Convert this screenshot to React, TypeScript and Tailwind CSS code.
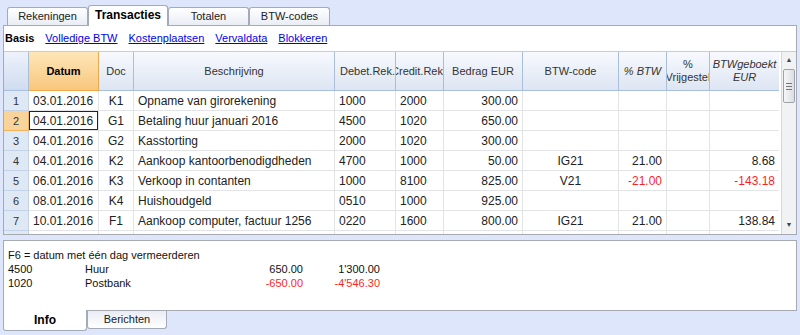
import React from "react";

const cols = "grid-cols-[25px_70px_35px_201px_61px_48px_79px_96px_48px_43px_70px]";

type Row = {
  n: number;
  date: string;
  doc: string;
  desc: string;
  deb: string;
  cred: string;
  amt: string;
  code?: string;
  pct?: string;
  btw?: string;
  neg?: boolean;
};

const rows: Row[] = [
  { n: 1, date: "03.01.2016", doc: "K1", desc: "Opname van girorekening", deb: "1000", cred: "2000", amt: "300.00" },
  { n: 2, date: "04.01.2016", doc: "G1", desc: "Betaling huur januari 2016", deb: "4500", cred: "1020", amt: "650.00" },
  { n: 3, date: "04.01.2016", doc: "G2", desc: "Kasstorting", deb: "2000", cred: "1020", amt: "300.00" },
  { n: 4, date: "04.01.2016", doc: "K2", desc: "Aankoop kantoorbenodigdheden", deb: "4700", cred: "1000", amt: "50.00", code: "IG21", pct: "21.00", btw: "8.68" },
  { n: 5, date: "06.01.2016", doc: "K3", desc: "Verkoop in contanten", deb: "1000", cred: "8100", amt: "825.00", code: "V21", pct: "-21.00", btw: "-143.18", neg: true },
  { n: 6, date: "08.01.2016", doc: "K4", desc: "Huishoudgeld", deb: "0510", cred: "1000", amt: "925.00" },
  { n: 7, date: "10.01.2016", doc: "F1", desc: "Aankoop computer, factuur 1256", deb: "0220", cred: "1600", amt: "800.00", code: "IG21", pct: "21.00", btw: "138.84" },
];

const cell = "h-[20px] border-r border-b border-[#e2e4e8] px-[4px] leading-[20px] whitespace-nowrap overflow-hidden";
const head =
  "h-[39px] border-r border-b border-[#a9bedb] bg-gradient-to-b from-[#f7f9fd] to-[#dde6f3] flex items-center justify-center text-center text-[11px] leading-[13px] text-[#333] overflow-hidden whitespace-nowrap";

function TopTab({ label, active }: { label: string; active?: boolean }) {
  return active ? (
    <div className="relative z-10 -mb-px h-[21px] w-[80px] rounded-t-[3px] border border-b-0 border-[#a3abb8] bg-white text-center text-[12px] font-bold leading-[19px] text-black">
      {label}
    </div>
  ) : (
    <div className="mt-[2px] h-[18px] w-[81px] rounded-t-[3px] border border-b-0 border-[#a3abb8] bg-gradient-to-b from-white to-[#e9edf4] text-center text-[11px] leading-[17px] text-[#222]">
      {label}
    </div>
  );
}

export default function App() {
  return (
    <div className="flex h-[335px] w-[800px] flex-col bg-[#dee6fc] font-['Liberation_Sans',Arial,sans-serif] text-black">
      {/* top tabs */}
      <div className="flex h-[25px] items-end pl-[7px] pt-[4px]">
        <TopTab label="Rekeningen" />
        <TopTab label="Transacties" active />
        <TopTab label="Totalen" />
        <TopTab label="BTW-codes" />
      </div>

      {/* main panel */}
      <div className="mx-[3px] flex h-[210px] flex-col border border-[#a7aab0] bg-white">
        <div className="flex h-[25px] items-center gap-[11px] pl-[1px] text-[11px]">
          <span className="font-bold">Basis</span>
          <span className="text-[#0000ee] underline">Volledige BTW</span>
          <span className="text-[#0000ee] underline">Kostenplaatsen</span>
          <span className="text-[#0000ee] underline">Vervaldata</span>
          <span className="text-[#0000ee] underline">Blokkeren</span>
        </div>
        <div className="flex min-h-0 flex-1 border-t border-[#c9ccd2]">
          <div className="min-w-0 flex-1 overflow-hidden">
            <div className={`grid w-[776px] ${cols} text-[12px] text-[#222]`}>
              <div className="h-[39px] border-r border-b border-[#a9bedb] bg-gradient-to-b from-[#eef2fb] to-[#cfdcf0]" />
              <div className="h-[39px] border-r border-b border-[#f0a94a] bg-gradient-to-b from-[#fde6b8] to-[#f9c77d] flex items-center justify-center text-[11px] font-bold text-black">
                Datum
              </div>
              <div className={head}>Doc</div>
              <div className={head}>Beschrijving</div>
              <div className={`${head} !justify-start pl-[5px]`}>Debet.Rek.</div>
              <div className={`${head} !justify-end`}>Credit.Rek</div>
              <div className={head}>Bedrag EUR</div>
              <div className={head}>BTW-code</div>
              <div className={`${head} italic`}>% BTW</div>
              <div className={head}>
                %<br />Vrijgestel
              </div>
              <div className={`${head} italic`}>
                BTWgeboekt
                <br />
                EUR
              </div>

              {rows.map((r) => (
                <React.Fragment key={r.n}>
                  <div
                    className={`h-[20px] border-r border-b text-center text-[11px] leading-[20px] text-[#333] ${
                      r.n === 2
                        ? "border-[#f0b45e] bg-[#f9d49a]"
                        : "border-[#c3d2e6] bg-[#dfe8f5]"
                    }`}
                  >
                    {r.n}
                  </div>
                  <div className={`${cell} ${r.n === 2 ? "shadow-[inset_0_0_0_1px_#222]" : ""}`}>{r.date}</div>
                  <div className={`${cell} text-center`}>{r.doc}</div>
                  <div className={cell}>{r.desc}</div>
                  <div className={cell}>{r.deb}</div>
                  <div className={cell}>{r.cred}</div>
                  <div className={`${cell} text-right`}>{r.amt}</div>
                  <div className={`${cell} text-center`}>{r.code}</div>
                  <div className={`${cell} text-right ${r.neg ? "text-[#ff1f1f]" : ""}`}>{r.pct}</div>
                  <div className={cell}></div>
                  <div className={`${cell} text-right ${r.neg ? "text-[#ff1f1f]" : ""}`}>{r.btw}</div>
                </React.Fragment>
              ))}
              <div className="h-[20px] border-r border-[#c3d2e6] bg-[#dfe8f5]" />
              {Array.from({ length: 10 }).map((_, i) => (
                <div key={i} className="h-[20px] border-r border-[#e2e4e8]" />
              ))}
            </div>
          </div>
          {/* scrollbar */}
          <div className="ml-[2px] flex w-[15px] flex-col border-l border-[#d6d8dc] bg-[#f1f2f4]">
            <div className="flex h-[17px] items-center justify-center text-[7px] text-[#444]">▲</div>
            <div className="mx-[1px] flex h-[34px] flex-col items-center justify-center gap-[2px] rounded-[2px] border border-[#9ea3ab] bg-gradient-to-r from-[#f6f6f7] to-[#dcdee2]">
              <div className="h-px w-[6px] bg-[#777]" />
              <div className="h-px w-[6px] bg-[#777]" />
              <div className="h-px w-[6px] bg-[#777]" />
            </div>
            <div className="flex-1" />
            <div className="flex h-[17px] items-center justify-center text-[7px] text-[#444]">▼</div>
          </div>
        </div>
      </div>

      {/* info panel */}
      <div className="mx-[3px] mt-[5px] h-[71px] border border-[#a7aab0] bg-white px-[4px] pt-[7px] text-[11px] leading-[14px] text-[#111]">
        <div>F6 = datum met één dag vermeerderen</div>
        <div className="grid grid-cols-[77px_70px_148px_77px]">
          <span>4500</span>
          <span>Huur</span>
          <span className="text-right">650.00</span>
          <span className="text-right">1'300.00</span>
          <span>1020</span>
          <span>Postbank</span>
          <span className="text-right text-[#ff1f1f]">-650.00</span>
          <span className="text-right text-[#ff1f1f]">-4'546.30</span>
        </div>
      </div>

      {/* bottom tabs */}
      <div className="flex pl-[3px]">
        <div className="relative z-10 -mt-px h-[21px] w-[84px] rounded-b-[3px] border border-t-0 border-[#a3abb8] bg-white text-center text-[12px] font-bold leading-[20px]">
          Info
        </div>
        <div className="h-[18px] w-[80px] rounded-b-[3px] border border-t-0 border-[#a3abb8] bg-gradient-to-b from-[#e9edf4] to-white text-center text-[11px] leading-[17px] text-[#222]">
          Berichten
        </div>
      </div>
    </div>
  );
}
